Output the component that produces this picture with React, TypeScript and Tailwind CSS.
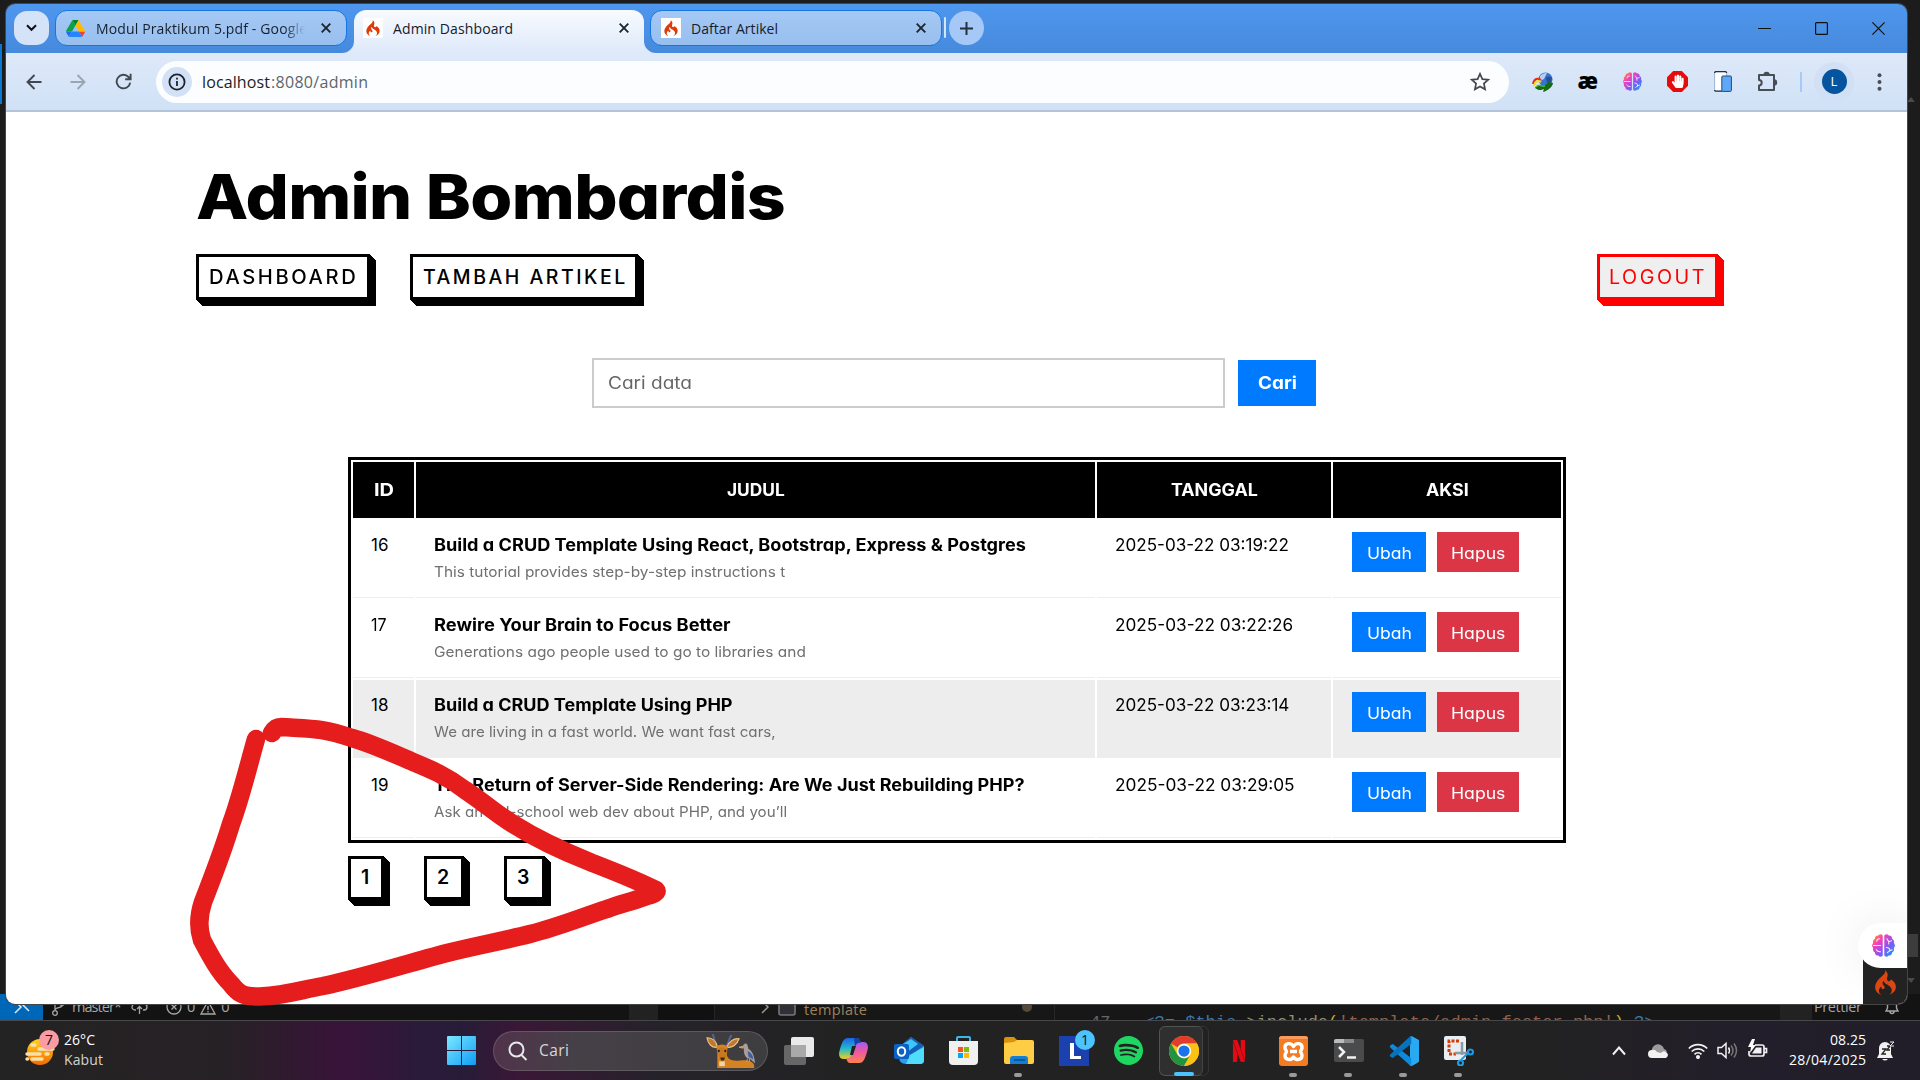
import { useLayoutEffect, useRef, useState } from 'react';
import type { ReactNode } from 'react';
import { FaHandPaper } from 'react-icons/fa';
import { SiCodeigniter, SiNetflix, SiSpotify } from 'react-icons/si';

/* Single line of text tracked so that it spans exactly `w` pixels. */
function Fit({ w, children, className = '' }: { w: number; children: string; className?: string }) {
  const ref = useRef<HTMLSpanElement>(null);
  const [spacing, setSpacing] = useState(0);
  useLayoutEffect(() => {
    if (!ref.current || children.length < 2) return;
    const natural = ref.current.getBoundingClientRect().width;
    setSpacing((w - natural) / (children.length - 1));
  }, [w, children]);
  return (
    <span className={`inline-block whitespace-nowrap ${className}`} style={{ width: w }}>
      <span ref={ref} style={{ letterSpacing: spacing }}>{children}</span>
    </span>
  );
}

/* Single line of text whose letterforms are widened to span exactly `w` pixels. */
function Wide({ w, children, className = '' }: { w: number; children: string; className?: string }) {
  const ref = useRef<HTMLSpanElement>(null);
  const [scale, setScale] = useState(1);
  useLayoutEffect(() => {
    if (ref.current) setScale(w / ref.current.offsetWidth);
  }, [w, children]);
  return (
    <span className={`inline-block whitespace-nowrap text-left align-top ${className}`} style={{ width: w }}>
      <span ref={ref} className="inline-block origin-left" style={{ transform: `scaleX(${scale})` }}>{children}</span>
    </span>
  );
}

const articles = [
  { id: '16', idW: 17, title: 'Build a CRUD Template Using React, Bootstrap, Express & Postgres', titleW: 592, text: 'This tutorial provides step-by-step instructions t', textW: 351, date: '2025-03-22 03:19:22', dateW: 174 },
  { id: '17', idW: 16, title: 'Rewire Your Brain to Focus Better', titleW: 296, text: 'Generations ago people used to go to libraries and', textW: 372, date: '2025-03-22 03:22:26', dateW: 178 },
  { id: '18', idW: 17, title: 'Build a CRUD Template Using PHP', titleW: 299, text: 'We are living in a fast world. We want fast cars,', textW: 342, date: '2025-03-22 03:23:14', dateW: 174, hover: true },
  { id: '19', idW: 17, title: 'The Return of Server-Side Rendering: Are We Just Rebuilding PHP?', titleW: 590, text: 'Ask an old-school web dev about PHP, and you’ll', textW: 353, date: '2025-03-22 03:29:05', dateW: 180 },
];

const Close = () => (
  <svg width="10" height="10" viewBox="0 0 10 10" stroke="#1c2530" strokeWidth="1.9"><path d="M.7.7l8.6 8.6M9.3.7L.7 9.3" /></svg>
);

const Flame = () => (
  <span className="flex h-5 w-5 shrink-0 items-center justify-center bg-white"><SiCodeigniter size={16} color="#dd3b0a" /></span>
);

const DriveLogo = () => (
  <svg width="19" height="17" viewBox="0 0 87.3 78" className="shrink-0">
    <path fill="#1b6ff5" d="M6.6 66.85l3.85 6.65c.8 1.4 1.95 2.5 3.3 3.3L27.5 53H0c0 1.55.4 3.1 1.2 4.5z" />
    <path fill="#0fa04c" d="M43.65 25L29.9 1.2c-1.35.8-2.5 1.9-3.3 3.3L1.2 48.5A9 9 0 000 53h27.5z" />
    <path fill="#ea4335" d="M73.55 76.8c1.35-.8 2.5-1.9 3.3-3.3l1.6-2.75 7.65-13.25c.8-1.4 1.2-2.95 1.2-4.5H59.8l5.85 11.5z" />
    <path fill="#00832d" d="M43.65 25L57.4 1.2C56.05.4 54.5 0 52.9 0H34.4c-1.6 0-3.15.45-4.5 1.2z" />
    <path fill="#2684fc" d="M59.8 53H27.5L13.75 76.8c1.35.8 2.9 1.2 4.5 1.2h50.8c1.6 0 3.15-.45 4.5-1.2z" />
    <path fill="#ffba00" d="M73.4 26.5L60.7 4.5c-.8-1.4-1.95-2.5-3.3-3.3L43.65 25 59.8 53h27.45c0-1.55-.4-3.1-1.2-4.5z" />
  </svg>
);

const BrainIcon = ({ size, id }: { size: number; id: string }) => (
  <svg width={size} height={size} viewBox="0 0 24 24">
    <defs>
      <linearGradient id={id} x1="0" y1="0" x2="1" y2="1">
        <stop offset="0" stopColor="#ffb000" /><stop offset=".3" stopColor="#f840b8" /><stop offset=".58" stopColor="#8f52f0" /><stop offset="1" stopColor="#00a8ff" />
      </linearGradient>
    </defs>
    <path fill={`url(#${id})`} d="M11.200 1.500Q9-1 6.500 1.500 3 1.500 3 5 .3 6.500 1.200 9.500-1 12 1.200 14.500.3 18 3 19.200 3.300 22.500 6.500 22.500 9 25 11.200 22.500zM12.800 1.500Q15-1 17.500 1.500 21 1.500 21 5 23.700 6.500 22.800 9.500 25 12 22.800 14.500 23.700 18 21 19.200 20.700 22.500 17.500 22.500 15 25 12.800 22.500z" />
    <path fill="none" stroke="#fff" strokeWidth="1.100" strokeLinecap="round" opacity=".9" d="M1.500 12H9M5 7.500q0-2.500 3-2.500M4.500 16.500q1.500 2.500 4.500 2M15.500 5l2 3 3-1M17.500 8v2.500M15 14q4 0 3.500 3.500M18.500 17.500l2.500-1M16 19.500l2.500-2" />
  </svg>
);

function TabStrip() {
  return (
    <div className="flex h-[49px] shrink-0 items-start bg-linear-to-b from-[#4e97ee] to-[#468add] pl-2 pt-1.5 font-['Open_Sans',sans-serif] text-[14px] text-[#15202d]">
      <div className="mt-px flex h-[34px] w-[35px] items-center justify-center rounded-[13px] bg-[#d4e3f8]">
        <svg width="11" height="8" viewBox="0 0 11 8" fill="none" stroke="#111" strokeWidth="2"><path d="M1 1.2l4.5 4.6L10 1.2" /></svg>
      </div>
      <div className="ml-[6px] flex h-[36px] w-[292px] items-center rounded-[12px] border border-[#1478e4] bg-linear-to-b from-[#a6c8f5] to-[#97bfee] pl-[10px] pr-[15px]">
        <DriveLogo />
        <div className="ml-[11px] flex w-[209px] overflow-hidden [mask-image:linear-gradient(to_right,black_90%,transparent)]"><Fit w={211}>Modul Praktikum 5.pdf - Google</Fit></div>
        <div className="ml-auto"><Close /></div>
      </div>
      <div className="relative ml-[7px] flex h-[43px] w-[290px] items-start rounded-t-[12px] bg-linear-to-b from-[#f8fbff] to-[#dee9f9] px-[9px]">
        <svg className="absolute -left-3 bottom-0" width="12" height="12"><path d="M12 0v12H0A12 12 0 0012 0z" fill="#dee9f9" /></svg>
        <svg className="absolute -right-3 bottom-0" width="12" height="12"><path d="M0 0v12h12A12 12 0 010 0z" fill="#dee9f9" /></svg>
        <div className="flex h-[36px] w-full items-center">
          <Flame />
          <Fit w={120} className="ml-[10px]">Admin Dashboard</Fit>
          <div className="ml-auto mr-[6px]"><Close /></div>
        </div>
      </div>
      <div className="ml-[6px] flex h-[36px] w-[292px] items-center rounded-[12px] border border-[#1478e4] bg-linear-to-b from-[#a6c8f5] to-[#97bfee] pl-[10px] pr-[15px]">
        <Flame />
        <Fit w={87} className="ml-[10px]">Daftar Artikel</Fit>
        <div className="ml-auto"><Close /></div>
      </div>
      <div className="ml-[2px] mt-[7px] h-[21px] w-[2px] rounded bg-[#d4e6fc]" />
      <div className="ml-[3px] mt-px flex h-[34px] w-[35px] items-center justify-center rounded-full bg-[#a5c8f6]">
        <svg width="13" height="13" stroke="#23303d" strokeWidth="2"><path d="M6.5 0v13M0 6.5h13" /></svg>
      </div>
      <div className="ml-auto mr-[22px] mt-3 flex gap-[44px]">
        <svg width="13" height="13" stroke="#111"><path d="M0 6.5h13" /></svg>
        <svg width="13" height="13" fill="none" stroke="#111" strokeWidth="1.2"><rect x=".6" y=".6" width="11.8" height="11.8" rx="1" /></svg>
        <svg width="13" height="13" stroke="#111" strokeWidth="1.2"><path d="M.4.4l12.2 12.2M12.6.4L.4 12.6" /></svg>
      </div>
    </div>
  );
}

const Ext = ({ children }: { children: ReactNode }) => <div className="flex w-[45px] shrink-0 items-center justify-center">{children}</div>;

function Toolbar() {
  return (
    <div className="flex h-[59px] shrink-0 items-center border-b-2 border-[#b3c3da] bg-linear-to-b from-[#dee9f9] to-[#d0e1f6]">
      <div className="flex w-[150px] items-center pl-[20px]">
        <svg width="16" height="16" viewBox="0 0 16 16" fill="none" stroke="#41484f" strokeWidth="1.9"><path d="M15.5 8H1.5M8.5 1L1.5 8l7 7" /></svg>
        <svg className="ml-[28px]" width="16" height="16" viewBox="0 0 16 16" fill="none" stroke="#9aa5b2" strokeWidth="1.9"><path d="M.5 8h14M7.5 1l7 7-7 7" /></svg>
        <svg className="ml-[29px]" width="17" height="17" viewBox="0 0 17 17" fill="none" stroke="#41484f" strokeWidth="1.9"><path d="M15.2 9.6A6.8 6.8 0 1113.5 4L15.5 6M15.6.8v5.4h-5.4" /></svg>
      </div>
      <div className="flex h-[42px] w-[1353px] items-center rounded-full bg-[#fcfdff] pl-[6px] pr-[19px]">
        <div className="flex h-[30px] w-[30px] items-center justify-center rounded-full bg-[#d3e1f7]">
          <svg width="18" height="18" fill="none" stroke="#1d232b" strokeWidth="1.8"><circle cx="9" cy="9" r="7.6" /><path d="M9 8v5M9 4.7v1.9" /></svg>
        </div>
        <div className="ml-[10px] flex pt-px font-['Open_Sans',sans-serif] text-[16px]">
          <Fit w={68} className="text-[#1b1e22]">localhost</Fit>
          <Fit w={97} className="ml-px text-[#60656b]">:8080/admin</Fit>
        </div>
        <svg className="ml-auto" width="20" height="19" viewBox="0 0 20 19" fill="none" stroke="#41484f" strokeWidth="1.7"><path d="M10 1.8l2.4 5.3 5.8.6-4.3 3.9 1.2 5.7L10 14.4l-5.1 2.9 1.2-5.7L1.8 7.7l5.8-.6z" /></svg>
      </div>
      <div className="ml-[11px] flex">
        <Ext>
          <svg width="21" height="20" viewBox="0 0 21 20">
            <circle cx="13.5" cy="7.5" r="7" fill="#3673ce" /><path d="M8 4c3-3 5-3 7-3l-3 6-4 2z" fill="#b7d0ef" /><path d="M14 5c3 0 4-1 6 1l-1 4-4 1z" fill="#294f98" />
            <path d="M1 12C2 6 6 6 9 8" fill="none" stroke="#e92b19" strokeWidth="2" /><path d="M2 14c1-5 4-6 7-4" fill="none" stroke="#f5dc22" strokeWidth="2" />
            <path d="M3 16c2-5 6-3 9-2l5-4 4 1c0 3-5 8-10 9l1-3c-4 2-6 1-9-1z" fill="#146b12" /><path d="M4 15c3-3 6 0 9-1" fill="none" stroke="#70dd38" />
          </svg>
        </Ext>
        <Ext><span className="pb-[3px] font-['Open_Sans',sans-serif] text-[22px] font-extrabold leading-5 tracking-tight">æ</span></Ext>
        <Ext><BrainIcon size={19} id="brainToolbar" /></Ext>
        <Ext>
          <svg width="21" height="21" viewBox="0 0 21 21"><path d="M6.2 0h8.6L21 6.2v8.6L14.8 21H6.2L0 14.8V6.2z" fill="#e40d0d" /><g transform="translate(4 3.4)"><FaHandPaper size={13.5} color="#fff" /></g></svg>
        </Ext>
        <Ext>
          <svg width="18" height="21" viewBox="0 0 18 21"><rect x=".6" y=".6" width="12" height="19.6" rx="1.5" fill="#fff" stroke="#9ab3d0" /><path d="M.6 2q0-1.400 1.400-1.400h9.200q1.400 0 1.400 1.400M.6 19q0 1.200 1.400 1.200H8" fill="none" stroke="#234" strokeWidth="1.300" /><rect x="7.8" y="5" width="9.6" height="15.4" rx="1" fill="#60a8f6" stroke="#214b80" /></svg>
        </Ext>
        <Ext>
          <svg width="21" height="21" viewBox="0 0 21 21" fill="none" stroke="#484e55" strokeWidth="2"><path d="M2 4h15v15H2v-4.6c3.6 0 3.6-5.3 0-5.3z" strokeLinejoin="round" /><path d="M7.4 4a2.2 2.2 0 014.4 0M17 9.2a2.2 2.2 0 010 4.4" fill="#484e55" /></svg>
        </Ext>
      </div>
      <div className="ml-[10px] h-[20px] w-[2px] bg-[#a6caf7]" />
      <div className="ml-[12px] flex h-[40px] w-[40px] items-center justify-center rounded-full bg-[#d2e0f5]">
        <div className="flex h-[25px] w-[25px] items-center justify-center rounded-full bg-[#05549f] font-['Open_Sans',sans-serif] text-[13px] text-white">L</div>
      </div>
      <svg className="ml-[23px]" width="5" height="18" fill="#484e55"><circle cx="2.5" cy="2.2" r="2" /><circle cx="2.5" cy="9" r="2" /><circle cx="2.5" cy="15.8" r="2" /></svg>
    </div>
  );
}

const blockShadow = 'shadow-[1px_1px_0_currentColor,2px_2px_0_currentColor,3px_3px_0_currentColor,4px_4px_0_currentColor,5px_5px_0_currentColor,6px_6px_0_currentColor]';

function BlockButton({ className, children }: { className: string; children: ReactNode }) {
  return <button className={`flex items-center border-[3px] border-current ${blockShadow} ${className}`}>{children}</button>;
}

function AdminPage() {
  return (
    <main className="flex-1 bg-white pt-[53px] font-['Inter',sans-serif] text-black [font-feature-settings:'cv11']">
      <header className="pl-[190px] pr-[189px]">
        <h1 className="flex text-[62px] font-extrabold leading-[64px] tracking-[-0.01em]"><Wide w={589}>Admin Bombardis</Wide></h1>
        <nav className="mt-[25px] flex">
          <BlockButton className="h-[46px] w-[174px] pl-[10px] pt-px text-[19.5px] font-medium tracking-[2.5px]"><Wide w={149}>DASHBOARD</Wide></BlockButton>
          <BlockButton className="ml-10 h-[46px] w-[228px] pl-[10px] pt-px text-[19.5px] font-medium tracking-[2.5px]"><Wide w={205}>TAMBAH ARTIKEL</Wide></BlockButton>
          <BlockButton className="ml-auto h-[46px] w-[121px] bg-[#efefef] pl-[9px] pt-px text-[19.5px] tracking-[2.5px] text-[#f00]"><Wide w={98}>LOGOUT</Wide></BlockButton>
        </nav>
      </header>
      <form className="mt-[58px] flex items-center pl-[586px]">
        <div className="flex h-[50px] w-[633px] items-center border-2 border-[#ccc] pl-[14px] pt-px text-[17px] text-[#666]"><Wide w={84}>Cari data</Wide></div>
        <button type="button" className="ml-[13px] flex h-[46px] w-[78px] items-center justify-center bg-[#007bff] pt-px text-[17px] font-bold text-white"><Wide w={39}>Cari</Wide></button>
      </form>
      <table className="ml-[342px] mt-[49px] w-[1218px] table-fixed border-separate border-spacing-[2px] border-[3px] border-black">
        <colgroup><col className="w-[61px]" /><col className="w-[679px]" /><col className="w-[234px]" /><col className="w-[228px]" /></colgroup>
        <thead>
          <tr className="h-[56px] text-[17px] font-bold text-white">
            <th className="bg-black p-0 pt-[2px]"><Wide w={20}>ID</Wide></th>
            <th className="bg-black p-0 pt-[2px]"><Wide w={58}>JUDUL</Wide></th>
            <th className="bg-black p-0 pt-[2px]"><Wide w={87}>TANGGAL</Wide></th>
            <th className="bg-black p-0 pt-[2px]"><Wide w={43}>AKSI</Wide></th>
          </tr>
        </thead>
        <tbody>
          {articles.map((a) => (
            <tr key={a.id} className={a.hover ? 'h-[78px] align-top *:border-b *:border-[#ededed] *:bg-[#ededed]' : 'h-[78px] align-top *:border-b *:border-[#ededed]'}>
              <td className="p-0 pl-[18px] pt-[13px] text-[17px] leading-[24px]"><Wide w={a.idW}>{a.id}</Wide></td>
              <td className="p-0 pl-[18px] pt-[13px]">
                <div className="flex text-[17px] font-bold leading-[24px]"><Wide w={a.titleW}>{a.title}</Wide></div>
                <div className="mt-[5px] flex text-[14.5px] leading-5 text-[#707070]"><Wide w={a.textW}>{a.text}</Wide></div>
              </td>
              <td className="p-0 pl-[18px] pt-[13px] text-[17px] leading-[24px]"><Wide w={a.dateW}>{a.date}</Wide></td>
              <td className="p-0 pl-[19px] pt-[12px]">
                <div className="flex gap-[11px] text-[16px] text-white">
                  <button className="flex h-10 w-[74px] items-center justify-center bg-[#007bff] pt-px"><Wide w={45}>Ubah</Wide></button>
                  <button className="flex h-10 w-[82px] items-center justify-center bg-[#dc3545] pt-px"><Wide w={54}>Hapus</Wide></button>
                </div>
              </td>
            </tr>
          ))}
        </tbody>
      </table>
      <div className="ml-[342px] mt-[13px] flex text-[19.5px] font-semibold">
        <BlockButton className="h-[44px] w-[36px] pl-[10px]">1</BlockButton>
        <BlockButton className="ml-10 h-[44px] w-[40px] pl-[10px]">2</BlockButton>
        <BlockButton className="ml-10 h-[44px] w-[41px] pl-[10px]">3</BlockButton>
      </div>
    </main>
  );
}

function EditorStatus() {
  return (
    <div className="flex h-[26px] items-center overflow-hidden bg-[#131313] font-['Open_Sans',sans-serif] text-[14.5px] text-[#a6a6a6]">
      <div className="flex h-full w-[43px] items-center justify-center bg-[#0067b8]">
        <svg width="16" height="14" fill="none" stroke="#d7e6f5" strokeWidth="1.6"><path d="M1 1l6 6-6 6M15-1L9 5l6 6" /></svg>
      </div>
      <svg className="ml-2" width="14" height="18" fill="none" stroke="#a6a6a6" strokeWidth="1.3"><circle cx="4" cy="15" r="2.3" /><circle cx="11" cy="5" r="2.3" /><path d="M4 12V2M11 7.500c0 3-7 1-7 4.500" /></svg>
      <Fit w={50} className="ml-[7px]">master*</Fit>
      <svg className="ml-[9px]" width="17" height="14" fill="none" stroke="#a6a6a6" strokeWidth="1.3"><path d="M5 10H4a3 3 0 010-6 5 5 0 019 0 3 3 0 010 6h-1M8.500 14V6.500M6 9l2.500-2.500L11 9" /></svg>
      <svg className="ml-[18px]" width="16" height="16" fill="none" stroke="#a6a6a6" strokeWidth="1.3"><circle cx="8" cy="8" r="7" /><path d="M5.500 5.500l5 5M10.500 5.500l-5 5" /></svg>
      <span className="ml-[5px]">0</span>
      <svg className="ml-[5px]" width="16" height="15" fill="none" stroke="#a6a6a6" strokeWidth="1.3"><path d="M8 1l7 13H1zM8 6v4M8 11v1.500" /></svg>
      <span className="ml-[5px]">0</span>
      <div className="ml-auto flex h-full w-[1291px] items-center bg-[#171717]">
        <div className="h-full w-[29px] bg-[#222]" />
        <div className="h-full w-[57px] border-r border-[#252525] bg-[#111]" />
        <svg className="ml-[46px]" width="8" height="14" fill="none" stroke="#999" strokeWidth="1.5"><path d="M1 1l6 6-6 6" /></svg>
        <svg className="ml-[9px]" width="18" height="18" fill="#303036" stroke="#75777c" strokeWidth="1.6"><path d="M1 1h9l2 3h5v11q0 2-2 2H3q-2 0-2-2z" /></svg>
        <Fit w={63} className="ml-2 pt-[5px] text-[#9c835c]">template</Fit>
        <div className="ml-[155px] h-2.5 w-2.5 rounded-full bg-[#554a37]" />
        <div className="ml-[22px] flex h-full w-[726px] items-start overflow-hidden border-l border-[#282828] pl-[35px] pt-[17px] font-['Liberation_Mono',monospace] text-[17px] leading-6">
          <span className="text-[#666]">47</span>
          <pre className="ml-[34px] font-['Liberation_Mono',monospace]"><span className="text-[#3a79ad]">&lt;?= $this</span><span className="text-[#91916d]">-&gt;include</span><span className="text-[#c9ab16]">(</span><span className="text-[#93604c]">'template/admin_footer.php'</span><span className="text-[#c9ab16]">)</span><span className="text-[#3a79ad]"> ?&gt;</span></pre>
        </div>
        <div className="h-full w-[32px] bg-[#222]" />
        <div className="flex h-full flex-1 items-center bg-[#131313] pl-[2px]"><Fit w={48}>Prettier</Fit>
          <svg className="ml-[23px]" width="14" height="16" fill="none" stroke="#a6a6a6" strokeWidth="1.4"><path d="M1 12h12l-1.500-3V5a4.500 4.500 0 00-9 0v4zM5 12.500a2 2 0 004 0" /></svg>
        </div>
      </div>
    </div>
  );
}

const TaskItem = ({ children, running, active }: { children: ReactNode; running?: boolean; active?: boolean }) => (
  <div className="relative flex h-[50px] w-[55px] shrink-0 items-center justify-center">
    {active && <div className="absolute inset-y-0 left-[3px] w-[50px] rounded-md border border-white/8" />}
    {active && <div className="absolute inset-y-0 left-[3px] w-[44px] rounded-md border border-white/10 bg-white/6" />}
    <div className="relative">{children}</div>
    {running && <div className="absolute -bottom-px left-[23px] h-[4px] w-[8px] rounded-full bg-[#9a9a9a]" />}
    {active && <div className="absolute bottom-0 left-[18px] h-1 w-5 rounded-full bg-[#4cc2ff]" />}
  </div>
);

function Taskbar() {
  return (
    <div className="flex h-[60px] items-center border-t border-[#48484a] bg-[linear-gradient(90deg,#232323_0%,#272125_12%,#39133a_18%,#2a1b3a_22%,#271c38_24%,#3a1736_27%,#26222a_34%,#222_45%,#222_80%,#221e2b_92%,#211e2a_100%)] font-['Open_Sans',sans-serif] text-white">
      <svg width="34" height="38" viewBox="0 0 34 38" className="mb-[3px] ml-[25px] shrink-0">
        <defs><linearGradient id="sun" x1="0" y1="0" x2="0" y2="1"><stop stopColor="#ffd21e" /><stop offset="1" stopColor="#f56a00" /></linearGradient></defs>
        <circle cx="15" cy="22" r="13" fill="url(#sun)" />
        <g stroke="#f8dfa6" strokeWidth="3.4" strokeLinecap="round"><path d="M7 15h3M14 19h14M2 24h13M21 24h2M7 29h10M2 29h.5" /></g>
        <circle cx="24" cy="10" r="10" fill="#fb9ba3" />
        <text x="20" y="15" fontSize="14" fontFamily="Open Sans" fill="#111">7</text>
      </svg>
      <div className="mb-[2px] ml-[5px] flex w-[60px] shrink-0 flex-col text-[14px] leading-5"><Fit w={31}>26°C</Fit><Fit w={39} className="text-[#d2d2d2]">Kabut</Fit></div>
      <svg className="ml-[323px] shrink-0" width="29" height="29" viewBox="0 0 29 29">
        <defs><linearGradient id="win" x1="0" y1="0" x2="1" y2="1"><stop stopColor="#7ce9ff" /><stop offset="1" stopColor="#0f9bf5" /></linearGradient></defs>
        <path fill="url(#win)" d="M0 1q0-1 1-1h13v14H0zM15 0h13q1 0 1 1v13H15zM0 15h14v14H1q-1 0-1-1zM15 15h14v13q0 1-1 1H15z" />
      </svg>
      <div className="ml-[17px] flex h-[40px] w-[275px] shrink-0 items-center rounded-full border border-white/15 bg-[linear-gradient(90deg,#51334b,#454047_30%,#3d3d3f)] pl-[14px] pr-[10px]">
        <svg width="20" height="20" fill="none" stroke="#e8e8e8" strokeWidth="2"><circle cx="8.500" cy="8.500" r="7" /><path d="M13.500 14l5 5" /></svg>
        <Fit w={30} className="ml-[11px] text-[15.500px] text-[#d8d8d8]">Cari</Fit>
        <svg className="mb-[2px] ml-auto self-end" width="51" height="34" viewBox="0 0 54 36">
          <path d="M12 13C8 7 9 4 7 0M21 13c4-5 3-8 6-12" fill="none" stroke="#596694" strokeWidth="2" />
          <path d="M1 4c5 0 10 3 11 10-6 1-10-4-11-10zM35 5c-5-1-11 3-13 9 6 1 11-3 13-9z" fill="#bd7932" stroke="#efc281" strokeWidth="1.200" />
          <path d="M12 36V20l-1-6c2-4 10-4 12 0l-1 7c0 6 6 8 14 7 8-1 14 1 15 5v3z" fill="#d58223" />
          <path d="M12 16l5-2 5 2-1 8c-1 5-6 5-7 0z" fill="#c7791f" /><path d="M15 25h5l-1 3h-3z" fill="#3f2b20" /><path d="M14 29h6v5h-6z" fill="#f1d4a3" />
          <circle cx="13.500" cy="18" r="1.200" fill="#222" /><circle cx="20.500" cy="18" r="1.200" fill="#222" />
          <path d="M39 13c1-3 4-4 5-1l1 4c4 2 6 7 7 15l-6-5c-4 0-6-4-6-10z" fill="#aa9da0" /><path d="M44 18c4 2 6 5 6 9l-5-3z" fill="#40609b" /><path d="M39 13l-4 1 4 1zM44 26l-1 4M46 26v4" stroke="#d5a367" fill="#d5a367" />
        </svg>
      </div>
      <div className="ml-[3px] flex">
        <TaskItem><svg width="30" height="28"><rect y="8" width="22" height="20" rx="2" fill="#676767" /><rect x="7" width="23" height="20" rx="2" fill="#e9e9e9" /><path d="M7 8h15v12H7z" fill="#a9a9a9" /></svg></TaskItem>
        <TaskItem>
          <svg width="29" height="27" viewBox="0 0 29 27">
            <defs>
              <linearGradient id="cpA" x1="0" y1="0" x2="0" y2="1"><stop stopColor="#1c64e8" /><stop offset=".5" stopColor="#24b7cd" /><stop offset="1" stopColor="#e8d317" /></linearGradient>
              <linearGradient id="cpB" x1="0" y1="0" x2="0" y2="1"><stop stopColor="#a45af1" /><stop offset=".5" stopColor="#ef5b9c" /><stop offset="1" stopColor="#ff824e" /></linearGradient>
            </defs>
            <path d="M9 1h9c2 0 3 2 4 5-3-1-5 1-6 4l-3 8c-1 3-3 4-6 4H5c-5 0-6-4-4-10C3 6 4 1 9 1z" fill="url(#cpA)" />
            <path d="M20 26h-9c-2 0-3-2-4-5 3 1 5-1 6-4l3-8c1-3 3-4 6-4h2c5 0 6 4 4 10-2 6-3 11-8 11z" fill="url(#cpB)" />
            <path d="M15 1h3c2 0 3 2 4 5-3-1-5 1-6 4z" fill="#173fa8" />
            <path d="M13 9h4l-3 9h-3z" fill="#222" />
          </svg>
        </TaskItem>
        <TaskItem>
          <svg width="30" height="30" viewBox="0 0 30 28"><path d="M5 10L17 0l13 9v14q0 4-4 4H12q-7 0-7-7z" fill="#2b9cf0" /><path d="M17 0l13 9-14 9L8 8z" fill="#1260b5" /><path d="M30 10v13q0 4-4 4H12l4-9z" fill="#50dcfb" /><path d="M5 10l12-8 7 5-12 9z" fill="#3fc6f8" /><rect y="7" width="15" height="15" rx="2" fill="#0b62c5" /><ellipse cx="7.500" cy="14.500" rx="3.700" ry="4.200" fill="none" stroke="#fff" strokeWidth="2" /></svg>
        </TaskItem>
        <TaskItem>
          <svg width="29" height="30" viewBox="0 0 29 30"><path d="M8 7V2q0-1 1-1h11q1 0 1 1v5" fill="none" stroke="#38b6ee" strokeWidth="2" /><path d="M0 5h29v20q0 4-4 4H4q-4 0-4-4z" fill="#f0f0f0" /><path d="M9 11h5v5H9z" fill="#f35325" /><path d="M15 11h5v5h-5z" fill="#81bc06" /><path d="M9 17h5v5H9z" fill="#05a6f0" /><path d="M15 17h5v5h-5z" fill="#ffba08" /></svg>
        </TaskItem>
        <TaskItem running>
          <svg width="30" height="28" viewBox="0 0 30 28"><path d="M0 2q0-2 2-2h8l4 4v5H0z" fill="#d9930a" /><path d="M0 6l10-1 3-2h15q2 0 2 2v20q0 2-2 2H2q-2 0-2-2z" fill="#ffcd45" /><path d="M6 27v-5q0-3 3-3h12q3 0 3 3v5z" fill="#147ed2" /><path d="M10 23h11" stroke="#064f91" strokeWidth="1.500" /></svg>
        </TaskItem>
        <TaskItem>
          <svg className="overflow-visible" width="30" height="30"><path d="M0 0h30v30H0z" fill="#1c41ae" /><path d="M11 7v16h11v-3h-7V7z" fill="#fff" /><circle cx="26" cy="4" r="10" fill="#4cc2ff" /><text x="22" y="9" fontSize="14" fontFamily="Open Sans" fill="#111">1</text></svg>
        </TaskItem>
        <TaskItem><SiSpotify size={29} color="#1ed760" /></TaskItem>
        <TaskItem active>
          <svg width="30" height="30" viewBox="0 0 48 48"><circle cx="24" cy="24" r="24" fill="#fbc116" /><path d="M3.200 12A24 24 0 0144.800 12H24a12 12 0 00-10.400 6z" fill="#e33b2e" /><path d="M3.200 12l10.400 18A12 12 0 0024 36l-6 11.250A24 24 0 013.200 12z" fill="#229342" /><path d="M13.600 30A12 12 0 0034.400 30L24 48q-3.500 0-6-.7z" fill="#229342" /><path d="M34.400 30A12 12 0 0024 12h20.800A24 24 0 0124 48z" fill="#fbc116" /><circle cx="24" cy="24" r="11.500" fill="#fff" /><circle cx="24" cy="24" r="9" fill="#1a73e8" /></svg>
        </TaskItem>
        <TaskItem><SiNetflix size={22} color="#e50914" /></TaskItem>
        <TaskItem running>
          <svg width="29" height="30" viewBox="0 0 29 30"><rect width="29" height="30" rx="3" fill="#f57b20" /><path d="M3 0h23q3 0 3 3H0q0-3 3-3z" fill="#fa9b5d" /><path d="M14.500 10.500C12 6 5.500 7 6 12c.2 2 1.500 2.500 1.500 3.500S6 17.500 6 19.500c0 4.500 6 5.500 8.500 1.500 2.500 4 8.500 3 8.500-1.500 0-2-1.500-3-1.500-4S22.800 14 23 12c.5-5-6-6-8.500-1.500zM11 15.500h7" fill="none" stroke="#fff" strokeWidth="3.400" strokeLinejoin="round" /></svg>
        </TaskItem>
        <TaskItem running><svg width="30" height="23"><rect width="30" height="23" rx="2" fill="#4a4b4d" /><path d="M0 2q0-2 2-2h8v4H0z" fill="#bbb" /><path d="M10 0h10v4H10z" fill="#888" /><path d="M5 8l5 5-5 5M13 18.500h9" stroke="#f2f2f2" strokeWidth="2.500" fill="none" /></svg></TaskItem>
        <TaskItem running>
          <svg width="30" height="30" viewBox="0 0 100 100"><path d="M71 1L96 12q4 2 4 6v64q0 4-4 6L75 99q-4 2-7-2l2-25V28z" fill="#29a9f2" /><path d="M71 99L4 38q-3-3 0-6l5-4q3-3 6 0l60 46v24z" fill="#0c8bdc" /><path d="M71 1L4 62q-3 3 0 6l5 4q3 3 6 0l60-46V2z" fill="#0873bd" /><path d="M71 1q4-1 6 0l19 11q4 2 4 6v64q0 4-4 6L77 99q-3 1-6 0 4-1 4-6V7q0-5-4-6z" fill="#29a9f2" /></svg>
        </TaskItem>
        <TaskItem running>
          <svg width="30" height="30" viewBox="0 0 30 30"><rect width="22" height="24" rx="2" fill="#e9eef3" /><path d="M5 16V5h11" fill="none" stroke="#d83b01" strokeWidth="3" strokeDasharray="3 1.500" /><path d="M5 18h7" stroke="#d83b01" strokeWidth="3" strokeDasharray="3 1.500" /><path d="M18 6v13M11 17h13" stroke="#8c9aa5" strokeWidth="2.500" /><g fill="none" stroke="#1c9ae4" strokeWidth="2.200"><circle cx="26.500" cy="16" r="2.500" /><circle cx="16.500" cy="27" r="2.500" /></g><path d="M24 17l-7 7" stroke="#1c9ae4" strokeWidth="2" /></svg>
        </TaskItem>
      </div>
      <div className="ml-auto flex items-center">
        <svg width="14" height="10" fill="none" stroke="#f1f1f1" strokeWidth="2"><path d="M1 8.500l6-7 6 7" /></svg>
        <svg className="ml-[22px]" width="21" height="14"><path d="M4 8a6 6 0 0112-3q2 0 3 3l-8 5z" fill="#9b9b9b" /><path d="M4 14a4 4 0 010-8q3-1 5 2l4 1q2-3 5-1 4 3 0 6z" fill="#f2f2f2" /></svg>
        <svg className="ml-[19px]" width="20" height="17" fill="none" stroke="#f1f1f1" strokeWidth="1.700"><path d="M.8 6.500a13 13 0 0118.400 0M3.700 9.500a9 9 0 0112.600 0M6.500 12.300a5 5 0 017 0" /><circle cx="10" cy="15" r="1.200" fill="#fff" /></svg>
        <svg className="ml-[9px]" width="21" height="19" fill="none" stroke="#f1f1f1" strokeWidth="1.500"><path d="M1 6.500h3.500L9 2.500v14l-4.500-4H1zM11.500 6.500q2 3 0 6" /><path d="M14 4.500q4 5 0 10M17 2.500q5 7 0 14" stroke="#777" /></svg>
        <svg className="mb-[3px] ml-[9px]" width="21" height="20" fill="none" stroke="#f1f1f1" strokeWidth="1.700"><path d="M8 6h7q2 0 2 2v7q0 2-2 2H4q-2 0-2-2v-3M17 9.500h2.500v4H17" /><path d="M9 8.500h5.500v6H5z" fill="#f1f1f1" stroke="none" /><path d="M5 0L1 8h3l-1 6 6-8H6l2-6z" fill="#fff" stroke="none" /></svg>
        <div className="mb-[2px] ml-[21px] flex flex-col items-end text-[14px] leading-5"><Fit w={36}>08.25</Fit><Fit w={77}>28/04/2025</Fit></div>
        <svg className="ml-[11px] mr-[26px]" width="17" height="20"><path d="M0 17l2-4V7a6 6 0 0112 0v6l2 4zM5 18h6q-3 3-6 0z" fill="#f1f1f1" /><path d="M5 8h4l-4 5h4M10 5h3l-3 4h3" fill="none" stroke="#222" strokeWidth="1.300" /><path d="M13 1h4l-4 4h4" fill="none" stroke="#f1f1f1" /></svg>
      </div>
    </div>
  );
}

export default function App() {
  return (
    <div className="relative flex h-[1080px] w-[1920px] flex-col overflow-hidden bg-[#1c1c1c]">
      <div className="h-[44px] shrink-0" />
      <div className="h-[60px] w-[2px] shrink-0 bg-[#0a78d0]" />
      <div className="mt-auto"><EditorStatus /></div>
      <Taskbar />
      <div className="absolute right-[2px] top-[934px] h-[23px] w-[12px] bg-[#3c3c3c]" />
      <svg className="absolute left-[1907px] top-[978px]" width="8" height="6"><path d="M0 0h8L4 5z" fill="#4a4a4a" /></svg>
      <svg className="absolute left-[1907px] top-[97px]" width="8" height="6"><path d="M0 5h8L4 0z" fill="#4a4a4a" /></svg>

      <div className="absolute left-[6px] top-[4px] flex h-[1000px] w-[1901px] flex-col overflow-hidden rounded-[9px] shadow-[0_0_0_1px_#454545]">
        <TabStrip />
        <Toolbar />
        <AdminPage />
        <div className="absolute bottom-0 right-0 flex h-[45px] w-[44px] items-end justify-center bg-[#232323] pb-[9px]"><SiCodeigniter size={25} color="#dd4814" /></div>
        <div className="absolute bottom-[36px] right-0 flex h-[45px] w-[49px] items-center rounded-l-full bg-white pl-[14px] shadow-[0_0_50px_rgba(0,0,0,.09)]"><BrainIcon size={23} id="brainWidget" /></div>
      </div>

      <svg className="pointer-events-none absolute inset-0" width="1920" height="1080" fill="none" stroke="#e61d1d" strokeWidth="18.500" strokeLinecap="round" strokeLinejoin="round">
        <path d="M272 733C275 728 278 727 281 727C315 729 322 728 352 738C373 744 392 753 413 762C430 769 447 776 465 790C486 804 498 815 513 824C540 841 565 852 590 862C610 870 632 878 656 890C658 892 655 894 644 897C630 902 620 904 607 909C582 917 558 927 530 934C502 941 475 946 447 953C405 964 365 977 323 986C300 990 288 995 260 996.500C242 997 238 993 231 984C219 972 211 957 202 940C198 928 198 917 203 902C211 881 222 854 231 824C241 797 248 767 256 739" />
      </svg>
    </div>
  );
}
